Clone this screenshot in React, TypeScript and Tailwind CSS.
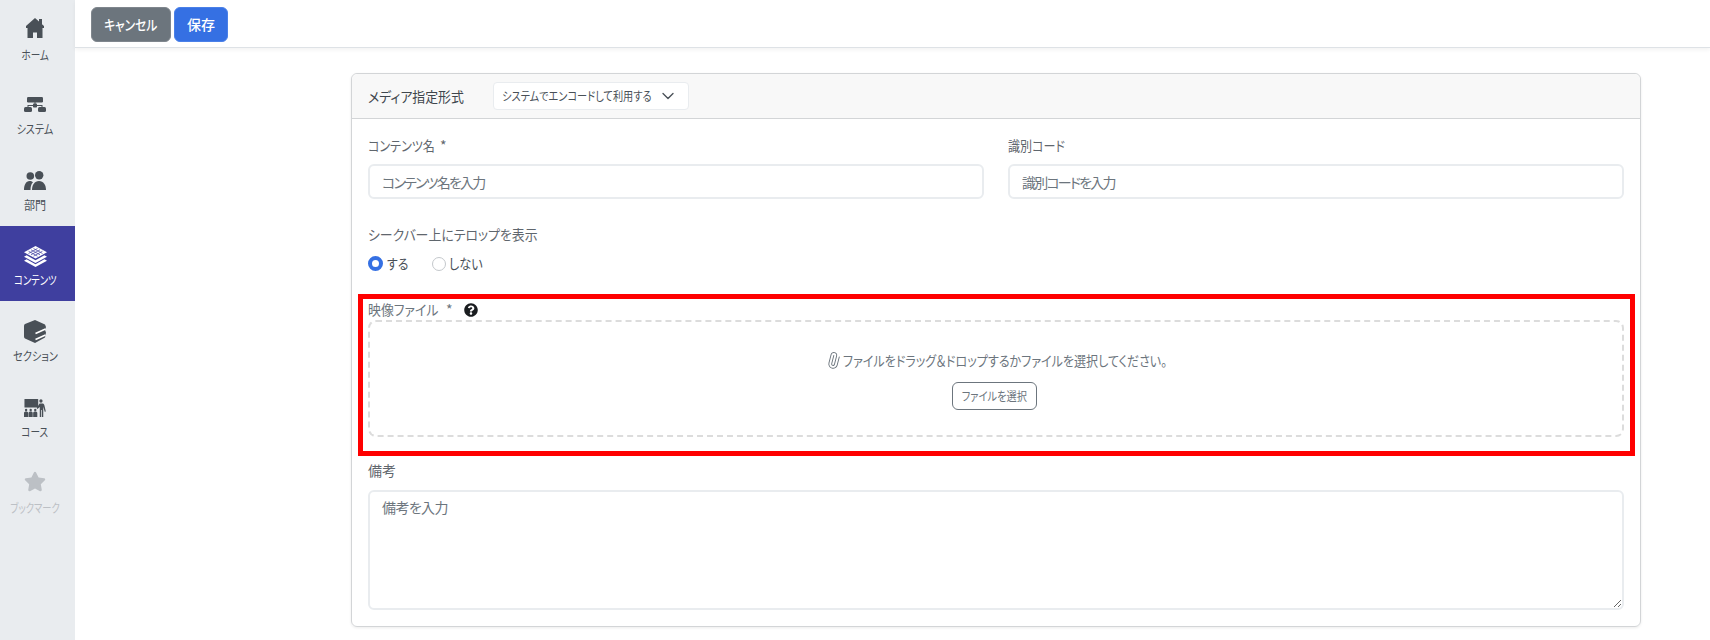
import { FaQuestionCircle, FaStar } from "react-icons/fa";
import { ChevronDown, Paperclip } from "lucide-react";

const font = "font-['Noto_Sans_CJK_JP','Liberation_Sans',sans-serif] [font-feature-settings:'palt']";

function HomeIcon() {
  return (
    <svg viewBox="0 0 18 20" className="mt-[17px] h-[20px] w-[18px]" fill="currentColor">
      <path d="M9 0 13 3.500V1h3v5.200L18 8v2h-1.500v10H11v-5.500H7V20H1.500V10H0V8z" />
    </svg>
  );
}

function SitemapIcon() {
  return (
    <svg viewBox="0 0 22 15" className="mt-[21px] h-[15px] w-[22px]" fill="currentColor">
      <rect x="3" y="0" width="16" height="5.500" rx="1.200" />
      <rect x="0" y="10" width="8" height="5" rx="1.500" />
      <rect x="14" y="10" width="8" height="5" rx="1.500" />
      <rect x="9" y="6.500" width="4" height="4" rx="0.800" />
      <path d="M10.500 5h1v2h-1zM3.500 8h15v2h-1V9h-13v1h-1z" />
    </svg>
  );
}

function PeopleIcon() {
  return (
    <svg viewBox="0 0 22 19" className="mt-[20px] h-[19px] w-[22px]" fill="currentColor">
      <circle cx="6.300" cy="5" r="3.800" />
      <circle cx="15.200" cy="4.200" r="4.200" />
      <path d="M0 19c0-5 2-9 5.500-9 1.500 0 2.500.4 3.500 1.200C7 13 6.500 16 6.500 19z" />
      <path d="M8 19c0-5 2.500-9 7-9s7 4 7 9z" />
    </svg>
  );
}

function LayersIcon() {
  return (
    <svg viewBox="0 0 23 21" className="mt-[20px] h-[21px] w-[23px]">
      <path d="M11.500 0 23 6.300 11.500 12.600 0 6.300z" fill="#fff" />
      <path
        d="M7 3.800 16 8.800M9.500 2.500 18.500 7.500M4.500 5.200 13.500 10.200M16 3.800 7 8.800M13.500 2.500 4.500 7.500M18.500 5.200 9.500 10.200"
        stroke="#3f3f9f"
        strokeWidth="0.700"
        fill="none"
      />
      <path d="M2.600 9.300 11.500 14.200 20.400 9.300 23 10.700 11.500 17 0 10.700z" fill="#fff" />
      <path d="M2.600 13.300 11.500 18.200 20.400 13.300 23 14.700 11.500 21 0 14.700z" fill="#fff" />
    </svg>
  );
}

function BooksIcon() {
  return (
    <svg viewBox="0 0 22 23" className="mt-[19px] h-[23px] w-[22px]">
      <path d="M11 0 21 4.500 22 7 21 10 22 12.500 21 17.500 11 23 1 18.500Q0 18 0 16.500V6q0-1.500 1-2z" fill="currentColor" />
      <path d="M11.500 13.500 21.500 9M11.500 19.500 21.500 15" stroke="#fff" strokeWidth="1.600" fill="none" />
    </svg>
  );
}

function CourseIcon() {
  return (
    <svg viewBox="0 0 24 18" preserveAspectRatio="none" className="mt-[23px] h-[18px] w-[22px]" fill="currentColor">
      <rect x="0.500" y="0" width="15" height="8.500" rx="0.500" />
      <circle cx="2.300" cy="11" r="1.300" />
      <circle cx="7.300" cy="11" r="1.300" />
      <circle cx="12.300" cy="11" r="1.300" />
      <path d="M0 18v-4c0-1 1-1.500 2.300-1.500S4.500 13 4.500 14v4zM5 18v-4c0-1 1-1.500 2.300-1.500S9.500 13 9.500 14v4zM10 18v-4c0-1 1-1.500 2.300-1.500s2.200.5 2.200 1.500v4z" />
      <circle cx="18.500" cy="2" r="1.800" />
      <path d="M16.500 4.500h4c1.200 0 1.500 1 1.800 2l1.500 6-1.200.3-1.600-5v10.200h-1.500v-7h-.8v7h-1.500V8l-2.500 2-.9-1 3.200-4.500z" />
    </svg>
  );
}

function NavItem({
  icon,
  label,
  scale,
  active,
  muted,
}: {
  icon: React.ReactNode;
  label: string;
  scale: string;
  active?: boolean;
  muted?: boolean;
}) {
  return (
    <div
      className={`flex h-[75px] flex-col items-center pr-[5px] ${
        active ? "bg-[#3f3f9f] text-white" : muted ? "text-[#bcc0c5]" : "text-[#495057]"
      }`}
    >
      <div className="flex h-[45px] items-start justify-center">{icon}</div>
      <span className={`text-[12px] leading-[18px] whitespace-nowrap ${scale}`}>{label}</span>
    </div>
  );
}

const inputClass =
  "block h-[35px] w-full rounded-[6px] border-2 border-[#e9ecef] bg-white px-[12px] text-[14px] outline-none placeholder:text-[#6c757d] placeholder:tracking-[-1.8px]";

const labelClass = "flex text-[14px] leading-[21px] whitespace-nowrap text-[#5f666d]";

export default function App() {
  return (
    <div className={`flex h-[640px] w-[1710px] overflow-hidden bg-white ${font}`}>
      <aside className="h-full w-[75px] shrink-0 bg-[#e9ecef] pt-[1px]">
        <NavItem icon={<HomeIcon />} label="ホーム" scale="scale-x-[0.8]" />
        <NavItem icon={<SitemapIcon />} label="システム" scale="-mt-[1px] scale-x-[0.84]" />
        <NavItem icon={<PeopleIcon />} label="部門" scale="scale-x-[0.92]" />
        <NavItem icon={<LayersIcon />} label="コンテンツ" scale="scale-x-[0.78]" active />
        <NavItem icon={<BooksIcon />} label="セクション" scale="mt-[1px] scale-x-[0.85]" />
        <NavItem icon={<CourseIcon />} label="コース" scale="mt-[2px] scale-x-[0.8]" />
        <NavItem icon={<FaStar className="mt-[20px] h-[21px] w-[22px]" />} label="ブックマーク" scale="mt-[3px] scale-x-[0.77]" muted />
      </aside>

      <div className="flex min-w-0 flex-1 flex-col">
        <header className="flex h-[48px] shrink-0 items-start gap-[3px] border-b border-[#dee2e6] px-[16px] pt-[7px] shadow-[0_2px_4px_rgba(0,0,0,0.05)]">
          <button className="h-[35px] w-[80px] rounded-[6px] border border-[#7f868d] bg-[#6c757d] text-[14px] font-medium text-white">
            <span className="inline-block scale-x-[0.84] whitespace-nowrap">キャンセル</span>
          </button>
          <button className="h-[35px] w-[54px] rounded-[6px] border border-[#4a80e8] bg-[#3570e3] text-[14px] font-medium text-white">
            保存
          </button>
        </header>

        <main className="flex-1 pt-[25px] pl-[276px]">
          <section className="relative h-[554px] w-[1290px] rounded-[6px] border border-[#d3d5d7] shadow-[0_1px_3px_rgba(0,0,0,0.08)]">
            <div className="flex h-[45px] items-center rounded-t-[6px] border-b border-[#d3d5d7] bg-[#f8f8f8] pl-[16px]">
              <span className="w-[125px] shrink-0 whitespace-nowrap text-[14px] text-[#3f464d]">
                <span className="inline-block origin-left scale-x-[0.92]">メディア指定形式</span>
              </span>
              <div className="flex h-[28px] w-[196px] items-center rounded-[4px] border border-[#e9ecef] bg-white pl-[8px] text-[12px] text-[#495057]">
                <span className="w-[149px] shrink-0 origin-left scale-x-[0.85] whitespace-nowrap">
                  システムでエンコードして利用する
                </span>
                <ChevronDown size={20} strokeWidth={1.600} className="ml-[7px] shrink-0" />
              </div>
            </div>

            <div className="px-[16px] pt-[16px]">
              <div className="grid grid-cols-2 gap-[24px]">
                <div>
                  <label className={labelClass}>
                    <span className="w-[65px] origin-left scale-x-[0.86]">コンテンツ名</span>
                    <span className="ml-[7px]">*</span>
                  </label>
                  <input className={`${inputClass} mt-[8px]`} placeholder="コンテンツ名を入力" />
                </div>
                <div>
                  <label className={labelClass}>
                    <span className="origin-left scale-x-[0.86]">識別コード</span>
                  </label>
                  <input className={`${inputClass} mt-[8px]`} placeholder="識別コードを入力" />
                </div>
              </div>

              <div className="mt-[25px]">
                <label className={labelClass}>
                  <span className="origin-left scale-x-[0.92]">シークバー上にテロップを表示</span>
                </label>
                <div className="mt-[8px] flex items-center text-[14px] leading-[21px] text-[#495057]">
                  <span className="h-[15px] w-[15px] rounded-full border-[4px] border-[#3570e3] bg-white" />
                  <span className="ml-[4px] w-[21px] origin-left scale-x-[0.85] whitespace-nowrap">する</span>
                  <span className="ml-[24px] h-[14px] w-[14px] rounded-full border border-[#c4c8cc] bg-white" />
                  <span className="ml-[3px] w-[33px] origin-left scale-x-[0.87] whitespace-nowrap">しない</span>
                </div>
              </div>

              <div className="mt-[25px] flex h-[21px] items-center text-[14px] text-[#6c757d]">
                <span className="w-[69px] origin-left scale-x-[0.92] whitespace-nowrap">映像ファイル</span>
                <span className="ml-[9px]">*</span>
                <FaQuestionCircle className="ml-[11px] text-[14px] text-[#1a1d20]" />
              </div>

              <div className="flex h-[117px] flex-col items-center rounded-[8px] border-2 border-dashed border-[#dcdcdc] pt-[28px] pr-[3px]">
                <div className="flex items-center text-[14px] leading-[21px] text-[#6c757d]">
                  <Paperclip size={17} strokeWidth={1.300} className="mr-[1px] rotate-[-30deg]" />
                  <span className="w-[322px] origin-left scale-x-[0.86] whitespace-nowrap">
                    ファイルをドラッグ＆ドロップするかファイルを選択してください。
                  </span>
                </div>
                <button className="mt-[11px] h-[28px] w-[85px] rounded-[6px] border border-[#6c757d] text-[12px] text-[#6c757d]">
                  <span className="inline-block scale-x-[0.85] whitespace-nowrap">ファイルを選択</span>
                </button>
              </div>

              <div className="mt-[23px]">
                <label className={labelClass}>備考</label>
                <textarea
                  className="mt-[9px] block h-[120px] w-full rounded-[6px] border-2 border-[#e9ecef] px-[12px] py-[5px] text-[14px] outline-none placeholder:tracking-[-0.6px] placeholder:text-[#6c757d]"
                  placeholder="備考を入力"
                />
              </div>
            </div>

            {/* annotation drawn over the form */}
            <div className="pointer-events-none absolute top-[220px] left-[6px] h-[162px] w-[1277px] border-[5px] border-[#ff0000]" />
          </section>
        </main>
      </div>
    </div>
  );
}
